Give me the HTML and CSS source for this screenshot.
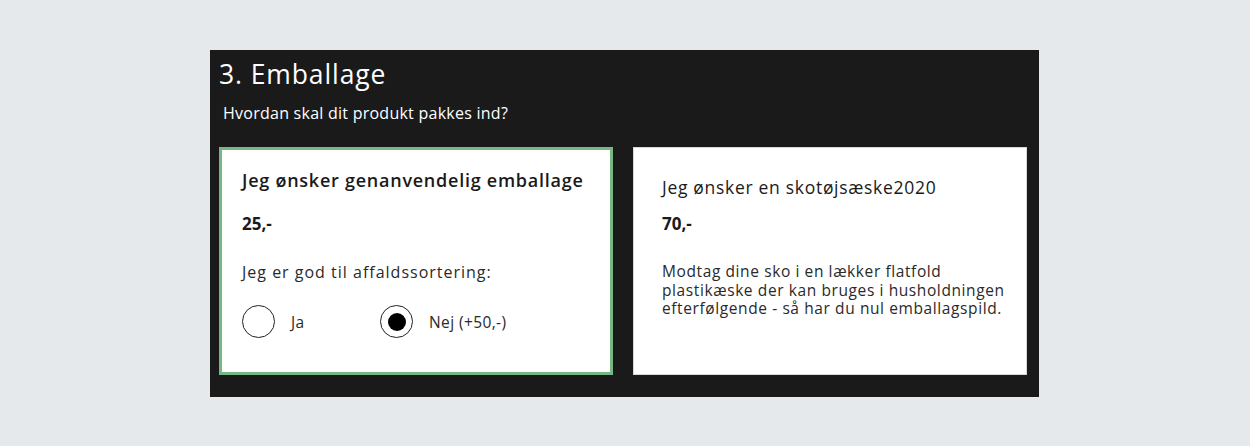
FILE: index.html
```html
<!DOCTYPE html>
<html lang="da">
<head>
  <meta charset="UTF-8">
  <meta name="viewport" content="width=device-width, initial-scale=1.0">
  <title>Emballage</title>
  <link rel="stylesheet" href="styles.css">
</head>
<body>
  <main class="main">
    <section class="step">
      <h2 class="step__title">3. Emballage</h2>
      <p class="step__question">Hvordan skal dit produkt pakkes ind?</p>

      <div class="options">
        <div class="option option_active">
          <h3 class="option__title option__title_strong">Jeg ønsker genanvendelig emballage</h3>
          <p class="option__price">25,-</p>
          <p class="option__text option__text_label">Jeg er god til affaldssortering:</p>

          <div class="choices">
            <label class="choice">
              <span class="radio"></span>
              <span>Ja</span>
            </label>
            <label class="choice">
              <span class="radio radio_checked"></span>
              <span>Nej (+50,-)</span>
            </label>
          </div>
        </div>

        <div class="option">
          <h3 class="option__title">Jeg ønsker en skotøjsæske2020</h3>
          <p class="option__price">70,-</p>
          <p class="option__text option__text_desc">Modtag dine sko i en lækker flatfold plastikæske der kan bruges i husholdningen efterfølgende - så har du nul emballagspild.</p>
        </div>
      </div>
    </section>
  </main>
</body>
</html>
```

FILE: styles.css
```css
*, *:after, *:before {
  box-sizing: border-box;
}

html, body {
  margin: 0;
  height: 100%;
  background-color: #e6e9ec;
  font-family: "Open Sans", "Noto Sans", sans-serif;
  color: #1a1a1a;
}

.main {
  padding: 50px 0 0 210px;
}

.step {
  width: 829px;
  height: 347px;
  padding: 8px 11px 0 9px;
  background-color: #1a1a1a;
}

.step__title {
  margin: 0;
  color: #fff;
  font-size: 26.5px;
  font-weight: 400;
  line-height: 32px;
  letter-spacing: 0.9px;
}

.step__question {
  margin: 13px 0 0 4px;
  color: #fff;
  font-size: 16px;
  line-height: 20px;
  letter-spacing: 0.25px;
}

.options {
  display: flex;
  column-gap: 20px;
  margin-top: 24px;
}

.option {
  width: 394px;
  height: 228px;
  padding: 27px 20px 0 28px;
  background-color: #fff;
  border: 1px solid #d8d8d8;
}

.option_active {
  padding: 18px 16px 0 20px;
  border: 3px solid #78b784;
}

.option__title {
  margin: 0;
  font-size: 17.5px;
  font-weight: 400;
  line-height: 24px;
  letter-spacing: 0.7px;
}

.option__title_strong {
  font-weight: 600;
  font-size: 18px;
  letter-spacing: 0.75px;
}

.option__price {
  margin: 14px 0 0;
  font-size: 17px;
  font-weight: 700;
  line-height: 22px;
}

.option_active .option__price {
  margin-top: 21px;
}

.option__text {
  margin: 26px 0 0;
  font-size: 15.5px;
  line-height: 20px;
  letter-spacing: 0.6px;
  color: #2a2a2a;
}

.option__text_label {
  margin-top: 27px;
  font-size: 16px;
  letter-spacing: 1px;
}

.option__text_desc {
  line-height: 18.5px;
  margin-top: 27px;
}

.choices {
  display: flex;
  margin-top: 23px;
}

.choice {
  display: flex;
  align-items: center;
  column-gap: 16px;
  width: 138px;
  font-size: 15.5px;
  letter-spacing: 0.4px;
  color: #2a2a2a;
}

.radio {
  display: flex;
  align-items: center;
  justify-content: center;
  width: 33px;
  height: 33px;
  border: 1.5px solid #222;
  border-radius: 50%;
}

.radio_checked:after {
  content: "";
  width: 18px;
  height: 18px;
  border-radius: 50%;
  background-color: #000;
}
```
